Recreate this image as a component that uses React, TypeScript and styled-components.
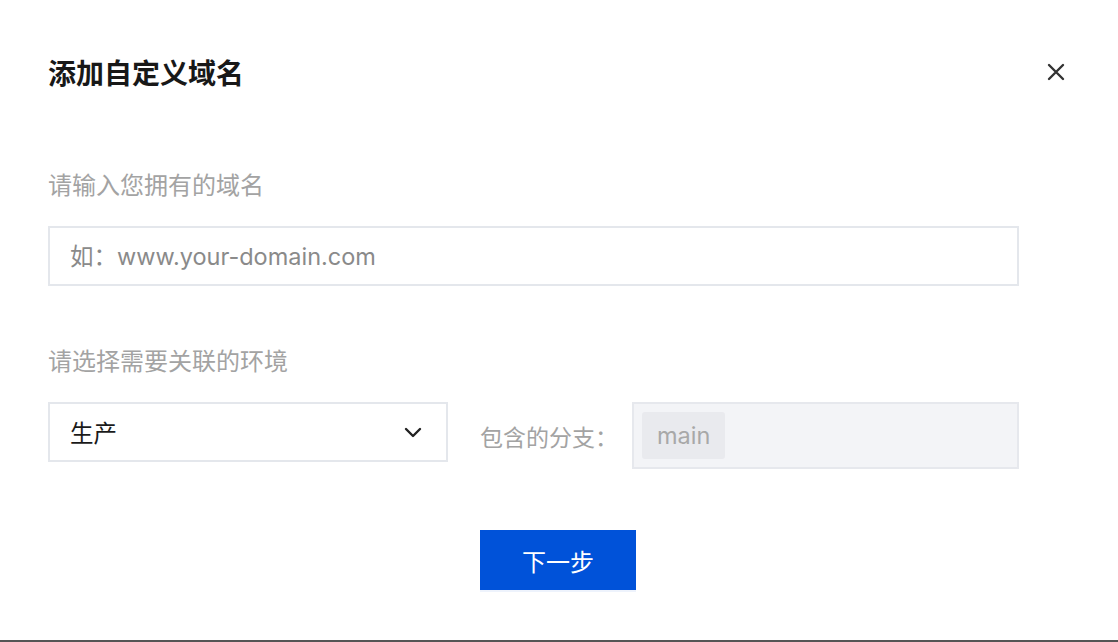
import React from 'react';
import styled, { createGlobalStyle } from 'styled-components';

const GlobalStyle = createGlobalStyle`
  html, body {
    margin: 0;
    padding: 0;
    background: #ffffff;
  }
  body {
    font-family: "Noto Sans CJK SC", "Noto Sans", sans-serif;
  }
  * {
    box-sizing: border-box;
  }
`;

const Dialog = styled.div`
  height: 642px;
  border-bottom: 2px solid #555555;
  background: #ffffff;
  padding: 56px 54px 0 48px;
  display: flex;
  flex-direction: column;
`;

const Header = styled.div`
  display: flex;
  justify-content: space-between;
  align-items: center;
  height: 32px;
`;

const Title = styled.h1`
  margin: 0;
  font-size: 28px;
  line-height: 32px;
  font-weight: 700;
  color: #181818;
`;

const CloseButton = styled.button`
  border: none;
  background: none;
  padding: 0;
  width: 20px;
  height: 20px;
  display: flex;
  align-items: center;
  justify-content: center;
  cursor: pointer;
  margin-right: -2px;
`;

const Body = styled.div`
  width: 971px;
  display: flex;
  flex-direction: column;
`;

const Label = styled.div<{ $top: number }>`
  margin-top: ${(p) => p.$top}px;
  font-size: 24px;
  line-height: 28px;
  color: #a3a3a3;
`;

const TextInput = styled.input`
  margin-top: 28px;
  height: 60px;
  width: 100%;
  border: 2px solid #e4e7ec;
  border-radius: 0;
  padding: 0 20px;
  font-family: Inter, "Noto Sans CJK SC", sans-serif;
  font-size: 23.5px;
  color: #181818;
  outline: none;
  background: #ffffff;

  &::placeholder {
    color: #8a8a8a;
  }
`;

const Row = styled.div`
  margin-top: 28px;
  display: flex;
  align-items: flex-start;
`;

const Select = styled.div`
  width: 400px;
  height: 60px;
  border: 2px solid #e4e7ec;
  display: flex;
  align-items: center;
  justify-content: space-between;
  padding: 0 24px 0 20px;
  font-size: 23.5px;
  color: #1a1a1a;
  cursor: pointer;
`;

const BranchLabel = styled.div`
  align-self: center;
  margin-left: 32px;
  font-size: 23px;
  color: #a3a3a3;
  white-space: nowrap;
`;

const BranchBox = styled.div`
  margin-left: 14px;
  flex: 1;
  height: 67px;
  background: #f3f4f7;
  border: 2px solid #e6e8ed;
  display: flex;
  align-items: center;
  padding: 0 8px;
`;

const Tag = styled.span`
  height: 47px;
  padding: 0 15px;
  border-radius: 3px;
  background: #e9eaee;
  color: #a8a8a8;
  font-size: 23.5px;
  display: flex;
  align-items: center;
  font-family: Inter, "Noto Sans", sans-serif;
`;

const Footer = styled.div`
  margin-top: 61px;
  display: flex;
  justify-content: center;
  padding-left: 4px;
`;

const PrimaryButton = styled.button`
  width: 156px;
  height: 60px;
  border: none;
  border-radius: 0;
  background: #0052d9;
  color: #ffffff;
  font-family: "Noto Sans CJK SC", "Noto Sans", sans-serif;
  font-size: 24px;
  cursor: pointer;
  box-shadow: 0 2px 0 #eef3fc;
`;

export default function App() {
  return (
    <>
      <GlobalStyle />
      <Dialog>
        <Header>
          <Title>添加自定义域名</Title>
          <CloseButton aria-label="关闭">
            <svg width="18" height="18" viewBox="0 0 18 18">
              <path d="M2 2 L16 16 M16 2 L2 16" stroke="#333333" strokeWidth="2.4" strokeLinecap="round" />
            </svg>
          </CloseButton>
        </Header>
        <Body>
          <Label $top={82}>请输入您拥有的域名</Label>
          <TextInput placeholder="如：www.your-domain.com" />
          <Label $top={60}>请选择需要关联的环境</Label>
          <Row>
            <Select>
              <span>生产</span>
              <svg width="18" height="11" viewBox="0 0 18 11">
                <path d="M2 2 L9 9 L16 2" fill="none" stroke="#222222" strokeWidth="2.4" strokeLinecap="round" strokeLinejoin="round" />
              </svg>
            </Select>
            <BranchLabel>包含的分支：</BranchLabel>
            <BranchBox>
              <Tag>main</Tag>
            </BranchBox>
          </Row>
        </Body>
        <Footer>
          <PrimaryButton>下一步</PrimaryButton>
        </Footer>
      </Dialog>
    </>
  );
}
